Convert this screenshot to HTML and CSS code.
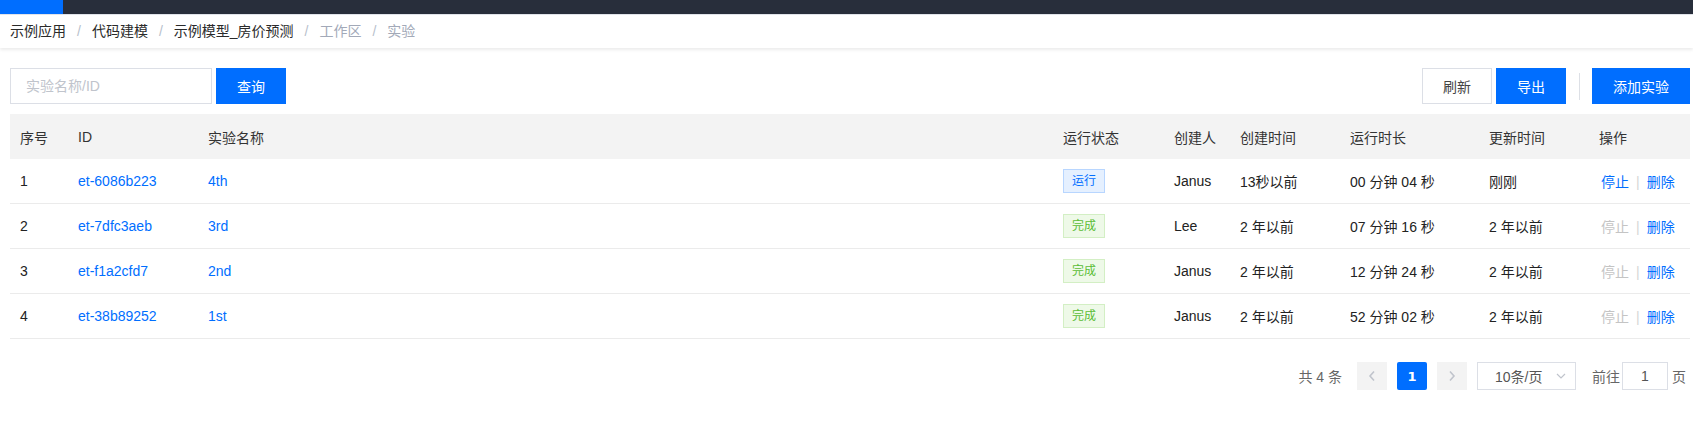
FILE: index.html
```html
<!DOCTYPE html>
<html lang="zh-CN">
<head>
  <meta charset="UTF-8" />
  <meta name="viewport" content="width=device-width, initial-scale=1.0"/>
  <title>实验</title>
  <link rel="stylesheet" href="styles.css">
</head>
<body>
  <div class="topbar"><div class="topbar-active"></div></div>

  <div class="breadcrumb"><span class="crumb">示例应用</span><span class="sep">/</span><span class="crumb">代码建模</span><span class="sep">/</span><span class="crumb">示例模型_房价预测</span><span class="sep">/</span><span class="crumb muted">工作区</span><span class="sep">/</span><span class="crumb muted">实验</span></div>

  <div class="main">
    <div class="toolbar">
      <div class="search">
        <input type="text" class="search-input" placeholder="实验名称/ID" />
        <button class="btn btn-primary">查询</button>
      </div>
      <div class="actions">
        <button class="btn">刷新</button>
        <button class="btn btn-primary">导出</button>
        <span class="divider"></span>
        <button class="btn btn-primary btn-wide">添加实验</button>
      </div>
    </div>

    <table class="grid">
      <colgroup>
        <col style="width:58px"><col style="width:130px"><col style="width:855px">
        <col style="width:111px"><col style="width:66px"><col style="width:110px">
        <col style="width:139px"><col style="width:110px"><col style="width:101px">
      </colgroup>
      <thead>
        <tr>
          <th>序号</th><th>ID</th><th>实验名称</th><th>运行状态</th><th>创建人</th>
          <th>创建时间</th><th>运行时长</th><th>更新时间</th><th>操作</th>
        </tr>
      </thead>
      <tbody>
        <tr>
          <td>1</td><td><a class="link">et-6086b223</a></td><td><a class="link">4th</a></td>
          <td><span class="tag tag-run">运行</span></td><td>Janus</td><td>13秒以前</td>
          <td>00 分钟 04 秒</td><td>刚刚</td>
          <td class="ops"><a class="link">停止</a><span class="bar">|</span><a class="link">删除</a></td>
        </tr>
        <tr>
          <td>2</td><td><a class="link">et-7dfc3aeb</a></td><td><a class="link">3rd</a></td>
          <td><span class="tag tag-done">完成</span></td><td>Lee</td><td>2 年以前</td>
          <td>07 分钟 16 秒</td><td>2 年以前</td>
          <td class="ops"><a class="link disabled">停止</a><span class="bar">|</span><a class="link">删除</a></td>
        </tr>
        <tr>
          <td>3</td><td><a class="link">et-f1a2cfd7</a></td><td><a class="link">2nd</a></td>
          <td><span class="tag tag-done">完成</span></td><td>Janus</td><td>2 年以前</td>
          <td>12 分钟 24 秒</td><td>2 年以前</td>
          <td class="ops"><a class="link disabled">停止</a><span class="bar">|</span><a class="link">删除</a></td>
        </tr>
        <tr>
          <td>4</td><td><a class="link">et-38b89252</a></td><td><a class="link">1st</a></td>
          <td><span class="tag tag-done">完成</span></td><td>Janus</td><td>2 年以前</td>
          <td>52 分钟 02 秒</td><td>2 年以前</td>
          <td class="ops"><a class="link disabled">停止</a><span class="bar">|</span><a class="link">删除</a></td>
        </tr>
      </tbody>
    </table>

    <div class="pager">
      <span class="total">共 4 条</span>
      <button class="page-btn page-nav">
        <svg width="8" height="12" viewBox="0 0 8 12"><path d="M6 1.5 L2 6 L6 10.5" fill="none" stroke="#c0c4cc" stroke-width="1.6"/></svg>
      </button>
      <button class="page-btn page-current">1</button>
      <button class="page-btn page-nav">
        <svg width="8" height="12" viewBox="0 0 8 12"><path d="M2 1.5 L6 6 L2 10.5" fill="none" stroke="#c0c4cc" stroke-width="1.6"/></svg>
      </button>
      <div class="page-size">
        <span>10条/页</span>
        <svg width="10" height="6" viewBox="0 0 10 6"><path d="M1 1 L5 5 L9 1" fill="none" stroke="#c0c4cc" stroke-width="1.2"/></svg>
      </div>
      <span class="jump">前往</span>
      <input type="text" class="jump-input" value="1" />
      <span class="jump-unit">页</span>
    </div>
  </div>
</body>
</html>
```

FILE: styles.css
```css
* {
  margin: 0;
  padding: 0;
  box-sizing: border-box;
}
body {
  font-family: 'Liberation Sans', 'Noto Sans CJK SC', sans-serif;
  font-size: 14px;
  color: #333;
  background: #fff;
}
.topbar {
  height: 15px;
  background: #282e3b;
  border-bottom: 1px solid #e1e4ea;
}
.topbar-active {
  width: 63px;
  height: 14px;
  background: #006eff;
}
.breadcrumb {
  height: 33px;
  line-height: 33px;
  padding-left: 10px;
  background: #fff;
  box-shadow: 0 2px 3px rgba(0, 0, 0, 0.08);
  position: relative;
}
.crumb {
  color: #2a2a2a;
}
.crumb.muted {
  color: #a2a9b8;
}
.sep {
  color: #b8bfcc;
  margin: 0 11px 0 11px;
}
.main {
  padding: 20px 3px 0 10px;
}
.toolbar {
  display: flex;
  justify-content: space-between;
  align-items: center;
  height: 36px;
  margin-bottom: 10px;
}
.search,
.actions {
  display: flex;
  align-items: center;
  gap: 4px;
}
.search-input {
  width: 202px;
  height: 36px;
  border: 1px solid #dcdfe6;
  padding: 0 15px;
  font-family: inherit;
  font-size: 14px;
  color: #333;
  outline: none;
}
.search-input::placeholder {
  color: #c0c4cc;
}
.btn {
  width: 70px;
  height: 36px;
  border: 1px solid #dcdfe6;
  background: #fff;
  color: #444;
  font-family: inherit;
  font-size: 14px;
  cursor: pointer;
}
.btn-primary {
  background: #006eff;
  border-color: #006eff;
  color: #fff;
}
.btn-wide {
  width: 98px;
}
.divider {
  width: 1px;
  height: 27px;
  background: #dde0e6;
  margin: 0 8px 0 9px;
}
.grid {
  width: 1680px;
  table-layout: fixed;
  border-collapse: separate;
  border-spacing: 0;
}
.grid th {
  height: 45px;
  background: #f3f3f3;
  font-weight: normal;
  text-align: left;
  padding: 0 10px;
  color: #333;
}
.grid td {
  height: 45px;
  padding: 0 10px;
  border-bottom: 1px solid #ebebeb;
  color: #222;
  white-space: nowrap;
}
.grid td.ops {
  padding-left: 12px;
}
.link {
  color: #006eff;
  text-decoration: none;
  cursor: pointer;
}
.link.disabled {
  color: #c4c4c4;
}
.bar {
  color: #d6d6d6;
  margin: 0 7px;
}
.tag {
  display: inline-block;
  width: 42px;
  height: 24px;
  line-height: 22px;
  text-align: center;
  font-size: 12px;
  border: 1px solid;
  vertical-align: middle;
}
.tag-run {
  background: #e5f0ff;
  border-color: #b8d6ff;
  color: #006eff;
}
.tag-done {
  background: #eef9e8;
  border-color: #d3efc4;
  color: #5bbd36;
}
.pager {
  display: flex;
  justify-content: flex-end;
  align-items: center;
  height: 28px;
  margin-top: 23px;
  padding-right: 4px;
  color: #666;
}
.total {
  margin-right: 15px;
}
.page-btn {
  width: 30px;
  height: 28px;
  border: none;
  margin-right: 10px;
  display: flex;
  align-items: center;
  justify-content: center;
}
.page-nav {
  background: #f3f3f3;
}
.page-current {
  background: #006eff;
  color: #fff;
  border-radius: 2px;
  font-family: 'DejaVu Sans', sans-serif;
  font-weight: bold;
  font-size: 13px;
}
.page-size {
  width: 99px;
  height: 28px;
  border: 1px solid #dcdfe6;
  display: flex;
  align-items: center;
  justify-content: space-between;
  padding: 0 9px 0 17px;
  color: #555;
}
.jump {
  margin-left: 16px;
  margin-right: 2px;
}
.jump-input {
  width: 46px;
  height: 28px;
  border: 1px solid #dcdfe6;
  text-align: center;
  font-family: inherit;
  font-size: 14px;
  color: #555;
  margin-right: 4px;
  outline: none;
}
```
